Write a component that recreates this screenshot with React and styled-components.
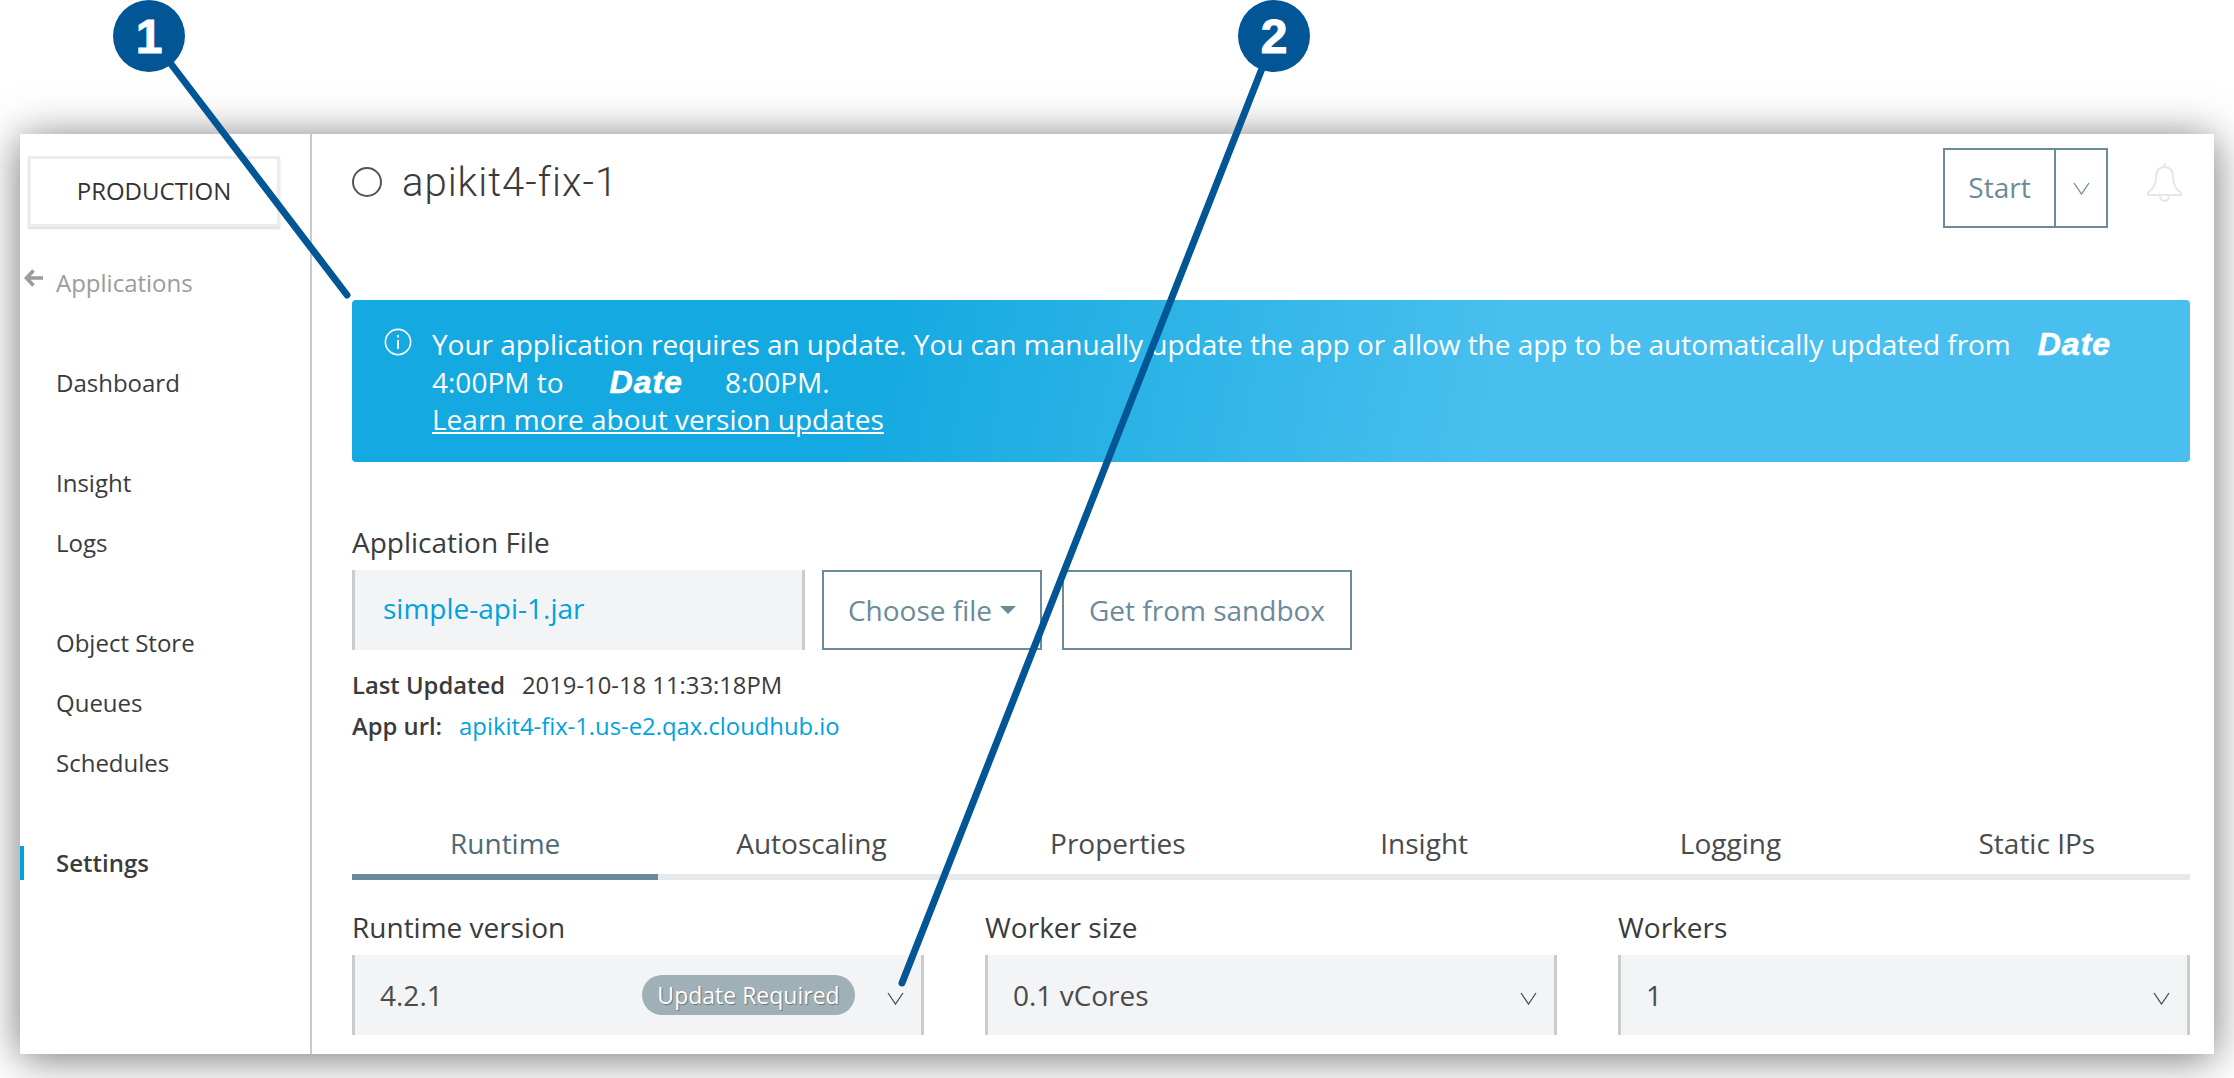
import styled, { createGlobalStyle } from "styled-components";

const GlobalStyle = createGlobalStyle`
  html, body {
    margin: 0;
    padding: 0;
    background: #fff;
    overflow: hidden;
  }
  * {
    box-sizing: border-box;
  }
`;

const Page = styled.div`
  position: relative;
  width: 2234px;
  height: 1078px;
  padding: 134px 20px 24px 20px;
  font-family: "Open Sans", sans-serif;
  color: #3a3b3d;
  overflow: hidden;
`;

const Frame = styled.div`
  width: 2194px;
  height: 920px;
  display: flex;
  background: #fff;
  box-shadow: 0 4px 40px rgba(0, 0, 0, 0.55);
`;

const Sidebar = styled.nav`
  width: 292px;
  flex-shrink: 0;
  border-right: 2px solid #c9cacb;
  padding-top: 22px;
  font-size: 24px;
`;

const EnvBox = styled.div`
  width: 252px;
  height: 71px;
  margin: 0 0 26px 8px;
  padding-bottom: 2px;
  display: flex;
  align-items: center;
  justify-content: center;
  border: 3px solid #ececec;
  box-shadow: 0 2px 2px #ddd;
  font-size: 24px;
  color: #333;
`;

const BackLink = styled.div`
  height: 60px;
  margin-bottom: 53px;
  padding: 0 0 2px 4px;
  display: flex;
  align-items: center;
  gap: 13px;
  color: #9b9c9e;
`;

const NavGroup = styled.div`
  margin-bottom: 66px;
  display: flex;
  flex-direction: column;
  gap: 26px;
`;

const NavItem = styled.div`
  height: 34px;
  padding: 0 0 2px 32px;
  display: flex;
  align-items: center;
  border-left: 4px solid ${(p) => (p.$active ? "#00a2df" : "transparent")};
  font-weight: ${(p) => (p.$active ? 600 : 400)};
`;

const Main = styled.main`
  flex: 1;
  min-width: 0;
  padding: 14px 24px 0 40px;
`;

const Header = styled.header`
  height: 80px;
  margin-bottom: 72px;
  display: flex;
  justify-content: space-between;
  align-items: flex-start;
`;

const TitleRow = styled.div`
  height: 40px;
  margin-top: 14px;
  display: flex;
  align-items: center;
  gap: 20px;
`;

const StatusDot = styled.span`
  width: 30px;
  height: 30px;
  border: 2px solid #555;
  border-radius: 50%;
`;

const Title = styled.h1`
  margin: 0;
  font-family: Roboto, sans-serif;
  font-size: 40px;
  font-weight: 300;
  letter-spacing: 1px;
  color: #3a3b3d;
`;

const Actions = styled.div`
  display: flex;
  align-items: flex-start;
  padding-right: 7px;
`;

const SplitButton = styled.div`
  width: 165px;
  height: 80px;
  display: flex;
  border: 2px solid #6b8a9a;
  color: #6b8a9a;
  font-size: 28px;
`;

const SplitMain = styled.div`
  width: 111px;
  padding-bottom: 2px;
  display: flex;
  align-items: center;
  justify-content: center;
  border-right: 2px solid #6b8a9a;
`;

const SplitCaret = styled.div`
  flex: 1;
  display: flex;
  align-items: center;
  justify-content: center;
`;

const BellWrap = styled.div`
  margin: 14px 0 0 38px;
  line-height: 0;
`;

const Banner = styled.section`
  height: 162px;
  padding: 26px 32px 0;
  display: flex;
  gap: 20px;
  border-radius: 4px;
  color: #fff;
  font-size: 28px;
  line-height: 37.5px;
  background: linear-gradient(100deg, #14a9e0 28%, #48bfee 62%);
`;

const InfoWrap = styled.div`
  padding-top: 2px;
  line-height: 0;
`;

const BannerLine = styled.div`
  display: flex;
  align-items: center;
  white-space: nowrap;
  letter-spacing: ${(p) => (p.$tight ? "-0.04px" : "normal")};
`;

const DateMark = styled.span`
  margin: 0 ${(p) => p.$right}px 0 ${(p) => p.$left}px;
  font-family: "Liberation Sans", Arial, sans-serif;
  font-size: 32px;
  font-weight: 700;
  font-style: italic;
  letter-spacing: 1px;
  -webkit-text-stroke: 0.6px #fff;
`;

const BannerLink = styled.a`
  color: #fff;
  text-decoration: underline;
`;

const FieldLabel = styled.div`
  height: 34px;
  margin-bottom: 11px;
  font-size: 28px;
  line-height: 34px;
  color: #3a3b3d;
`;

const FileSection = styled.section`
  margin-top: 63px;
`;

const FileRow = styled.div`
  height: 80px;
  display: flex;
`;

const FileName = styled.div`
  width: 453px;
  padding: 0 0 4px 28px;
  display: flex;
  align-items: center;
  background: #f3f4f6;
  border-left: 3px solid #cbcccd;
  border-right: 3px solid #cbcccd;
  color: #00a2df;
  font-size: 28px;
`;

const OutlineButton = styled.button`
  width: ${(p) => p.$width}px;
  height: 80px;
  margin-left: ${(p) => p.$gap}px;
  padding: 0;
  display: flex;
  align-items: center;
  justify-content: center;
  gap: 8px;
  background: #fff;
  border: 2px solid #6b8a9a;
  color: #6b8a9a;
  font-family: "Open Sans", sans-serif;
  font-size: 28px;
`;

const DropTriangle = styled.span`
  width: 0;
  height: 0;
  border-left: 8px solid transparent;
  border-right: 8px solid transparent;
  border-top: 8px solid #6b8a9a;
`;

const Meta = styled.div`
  margin-top: 14px;
  font-size: 23.8px;
`;

const MetaRow = styled.div`
  height: 41px;
  display: flex;
  align-items: center;
  gap: 17px;
`;

const MetaKey = styled.span`
  font-weight: 600;
`;

const MetaLink = styled.a`
  color: #00a2df;
`;

const Tabs = styled.div`
  margin-top: 68px;
  display: grid;
  grid-template-columns: repeat(6, 1fr);
  background: linear-gradient(#e6e8ea, #e6e8ea) bottom / 100% 6px no-repeat;
`;

const Tab = styled.div`
  height: 66px;
  padding-bottom: 2px;
  display: flex;
  align-items: center;
  justify-content: center;
  border-bottom: 6px solid ${(p) => (p.$active ? "#6b8a9a" : "transparent")};
  color: ${(p) => (p.$active ? "#4f6a78" : "#4a4b4d")};
  font-size: 28px;
`;

const FormGrid = styled.div`
  margin-top: 30px;
  display: grid;
  grid-template-columns: repeat(3, 572px);
  column-gap: 61px;
`;

const SelectBox = styled.div`
  height: 80px;
  padding: 0 17px 0 25px;
  display: flex;
  align-items: center;
  background: #f3f4f6;
  border-left: 3px solid #cbcccd;
  border-right: 3px solid #cbcccd;
  font-size: 28px;
  color: #4a4b4d;

  svg {
    margin-top: 6px;
  }
`;

const SelectValue = styled.span`
  flex: 1;
`;

const Badge = styled.span`
  width: 213px;
  height: 40px;
  margin-right: 32px;
  display: flex;
  align-items: center;
  justify-content: center;
  border-radius: 20px;
  background: #a0b0b7;
  color: #fff;
  font-size: 23px;
  text-shadow: 1px 1px 1px rgba(0, 0, 0, 0.35);
`;

const BackArrow = styled.svg`
  margin-top: -8px;
`;

const Overlay = styled.svg`
  position: absolute;
  inset: 0;
  pointer-events: none;
`;

const Callout = styled.div`
  position: absolute;
  top: 0;
  left: ${(p) => p.$left}px;
  width: 72px;
  height: 72px;
  display: flex;
  align-items: center;
  justify-content: center;
  border-radius: 50%;
  background: #025696;
  color: #fff;
  font-family: "Liberation Sans", Arial, sans-serif;
  font-size: 48px;
  font-weight: 700;
  -webkit-text-stroke: 1px #fff;
`;

function Chevron() {
  return (
    <svg width="17" height="13" viewBox="0 0 17 13" fill="none">
      <path d="M1 1l7.500 11 7.500-11" stroke="currentColor" strokeWidth="1.300" />
    </svg>
  );
}

function ArrowBack() {
  return (
    <BackArrow width="19" height="18" viewBox="0 0 19 18" fill="none">
      <path d="M9.500 1.500L2.500 9l7 7.500M3 9h16" stroke="#9b9c9e" strokeWidth="3.600" />
    </BackArrow>
  );
}

function InfoIcon() {
  return (
    <svg width="28" height="28" viewBox="0 0 28 28" fill="none" stroke="#fff">
      <circle cx="14" cy="14" r="12.600" strokeWidth="1.600" />
      <path d="M14 12v9" strokeWidth="2" />
      <path d="M14 7v2.400" strokeWidth="2" />
    </svg>
  );
}

function BellIcon() {
  return (
    <svg width="37" height="40" viewBox="0 0 37 40" fill="none" stroke="#e4e6e8" strokeWidth="2">
      <path d="M18.500 1v4M18.500 5c-6 0-8.500 4.500-8.500 11 0 7-3 11-8 15v2h33v-2c-5-4-8-8-8-15 0-6.500-2.500-11-8.500-11z" />
      <path d="M14 33c0 4 2 6 4.500 6s4.500-2 4.500-6" />
    </svg>
  );
}

const tabs = ["Runtime", "Autoscaling", "Properties", "Insight", "Logging", "Static IPs"];

export default function App() {
  return (
    <Page>
      <GlobalStyle />
      <Frame>
        <Sidebar>
          <EnvBox>PRODUCTION</EnvBox>
          <BackLink>
            <ArrowBack />
            Applications
          </BackLink>
          <NavGroup>
            <NavItem>Dashboard</NavItem>
          </NavGroup>
          <NavGroup>
            <NavItem>Insight</NavItem>
            <NavItem>Logs</NavItem>
          </NavGroup>
          <NavGroup>
            <NavItem>Object Store</NavItem>
            <NavItem>Queues</NavItem>
            <NavItem>Schedules</NavItem>
          </NavGroup>
          <NavGroup>
            <NavItem $active>Settings</NavItem>
          </NavGroup>
        </Sidebar>
        <Main>
          <Header>
            <TitleRow>
              <StatusDot />
              <Title>apikit4-fix-1</Title>
            </TitleRow>
            <Actions>
              <SplitButton>
                <SplitMain>Start</SplitMain>
                <SplitCaret>
                  <Chevron />
                </SplitCaret>
              </SplitButton>
              <BellWrap>
                <BellIcon />
              </BellWrap>
            </Actions>
          </Header>

          <Banner>
            <InfoWrap>
              <InfoIcon />
            </InfoWrap>
            <div>
              <BannerLine $tight>
                Your application requires an update. You can manually update the app or allow the app to be automatically updated from
                <DateMark $left={27} $right={0}>Date</DateMark>
              </BannerLine>
              <BannerLine>
                4:00PM to
                <DateMark $left={46} $right={42}>Date</DateMark>
                8:00PM.
              </BannerLine>
              <BannerLine>
                <BannerLink>Learn more about version updates</BannerLink>
              </BannerLine>
            </div>
          </Banner>

          <FileSection>
            <FieldLabel>Application File</FieldLabel>
            <FileRow>
              <FileName>simple-api-1.jar</FileName>
              <OutlineButton $width={220} $gap={17}>
                Choose file
                <DropTriangle />
              </OutlineButton>
              <OutlineButton $width={290} $gap={20}>
                Get from sandbox
              </OutlineButton>
            </FileRow>
          </FileSection>

          <Meta>
            <MetaRow>
              <MetaKey>Last Updated</MetaKey>
              <span>2019-10-18 11:33:18PM</span>
            </MetaRow>
            <MetaRow>
              <MetaKey>App url:</MetaKey>
              <MetaLink>apikit4-fix-1.us-e2.qax.cloudhub.io</MetaLink>
            </MetaRow>
          </Meta>

          <Tabs>
            {tabs.map((t, i) => (
              <Tab key={t} $active={i === 0}>
                {t}
              </Tab>
            ))}
          </Tabs>

          <FormGrid>
            <div>
              <FieldLabel>Runtime version</FieldLabel>
              <SelectBox>
                <SelectValue>4.2.1</SelectValue>
                <Badge>Update Required</Badge>
                <Chevron />
              </SelectBox>
            </div>
            <div>
              <FieldLabel>Worker size</FieldLabel>
              <SelectBox>
                <SelectValue>0.1 vCores</SelectValue>
                <Chevron />
              </SelectBox>
            </div>
            <div>
              <FieldLabel>Workers</FieldLabel>
              <SelectBox>
                <SelectValue>1</SelectValue>
                <Chevron />
              </SelectBox>
            </div>
          </FormGrid>
        </Main>
      </Frame>

      <Overlay width="2234" height="1078" viewBox="0 0 2234 1078" fill="none">
        <path d="M168 60L347 295" stroke="#025696" strokeWidth="7" strokeLinecap="round" />
        <path d="M1263 66L902 983" stroke="#025696" strokeWidth="7" strokeLinecap="round" />
      </Overlay>
      <Callout $left={113}>1</Callout>
      <Callout $left={1238}>2</Callout>
    </Page>
  );
}
